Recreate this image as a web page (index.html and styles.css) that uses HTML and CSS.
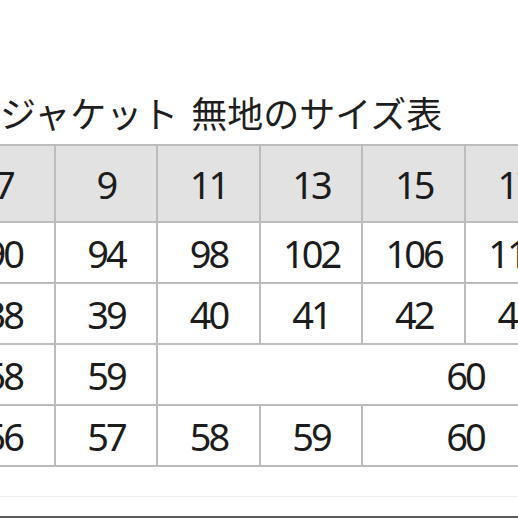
FILE: index.html
```html
<!DOCTYPE html>
<html lang="ja">
<head>
<meta charset="utf-8">
<link rel="stylesheet" href="styles.css">
</head>
<body>
<div class="page">
  <h1 class="title">ジャケット 無地のサイズ表</h1>
  <table class="size-table">
    <colgroup>
      <col class="c"><col class="c"><col class="c"><col class="c"><col class="c"><col class="c"><col class="c"><col class="c">
    </colgroup>
    <thead>
      <tr><th>7</th><th>9</th><th>11</th><th>13</th><th>15</th><th>17</th><th>19</th><th>21</th></tr>
    </thead>
    <tbody>
      <tr><td>90</td><td>94</td><td>98</td><td>102</td><td>106</td><td>110</td><td>114</td><td>118</td></tr>
      <tr><td>38</td><td>39</td><td>40</td><td>41</td><td>42</td><td>43</td><td>44</td><td>45</td></tr>
      <tr><td>58</td><td>59</td><td colspan="6">60</td></tr>
      <tr><td>56</td><td>57</td><td>58</td><td>59</td><td colspan="2">60</td><td>61</td><td>61</td></tr>
    </tbody>
  </table>
  <div class="footer-rule"></div>
  <div class="footer-bar"></div>
</div>
</body>
</html>
```

FILE: styles.css
```css
html, body {
  margin: 0;
  padding: 0;
  background: #ffffff;
  overflow: hidden;
  width: 518px;
  height: 518px;
}

.page {
  width: 518px;
  height: 518px;
  overflow: hidden;
  padding-top: 92px;
  box-sizing: border-box;
}

.title {
  margin: 0 0 12px 0;
  font-family: "Noto Sans CJK JP", "Noto Sans", sans-serif;
  font-weight: 400;
  font-size: 36px;
  line-height: 40px;
  word-spacing: 5px;
  color: #1e1e1e;
  white-space: nowrap;
}

.size-table {
  margin-left: -49px;
  border-collapse: collapse;
  table-layout: fixed;
  width: 821px;
}

.size-table .c {
  width: 102.6px;
}

.size-table th,
.size-table td {
  border: 2px solid #bcbcbc;
  padding: 0;
  text-align: center;
  font-family: "Noto Sans", sans-serif;
  font-weight: 400;
  font-size: 38px;
  letter-spacing: -3px;
  color: #1c1c1c;
  white-space: nowrap;
}

.size-table th {
  background: #e2e2e2;
  height: 75px;
}

.size-table td {
  height: 59px;
}

.footer-rule {
  margin-top: 29px;
  height: 1px;
  background: #f0f0f0;
}

.footer-bar {
  margin-top: 19px;
  height: 3px;
  background: #5a5a5a;
}
```
